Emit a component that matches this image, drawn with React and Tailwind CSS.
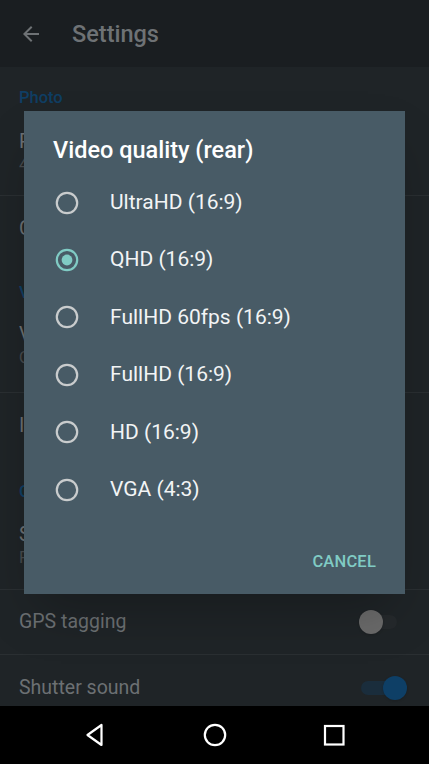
import React from "react";

const font = { fontFamily: "Roboto, 'Noto Sans', sans-serif" };

function Radio({ checked }) {
  return (
    <div className="w-[86px] h-full flex items-center pl-[31px] shrink-0">
      <svg width="24" height="24" viewBox="0 0 24 24">
        {checked ? (
          <>
            <circle cx="12" cy="12" r="10.2" fill="none" stroke="#80cbc4" strokeWidth="2.2" />
            <circle cx="12" cy="12" r="5.4" fill="#80cbc4" />
          </>
        ) : (
          <circle cx="12" cy="12" r="10.2" fill="none" stroke="#c9cccd" strokeWidth="2.2" />
        )}
      </svg>
    </div>
  );
}

const titleCls = "text-[19.5px] leading-[24px] text-[#6c7073]";
const subCls = "text-[16px] leading-[22px] text-[#474b4e]";
const headCls = "pl-[19px] shrink-0 text-[16.5px] leading-[22px] font-medium text-[#0f3e63]";

export default function App() {
  const options = [
    "UltraHD (16:9)",
    "QHD (16:9)",
    "FullHD 60fps (16:9)",
    "FullHD (16:9)",
    "HD (16:9)",
    "VGA (4:3)",
  ];
  return (
    <div style={font} className="relative w-[429px] h-[764px] overflow-hidden bg-[#1f2427] flex flex-col">
      {/* toolbar */}
      <div className="h-[67px] shrink-0 bg-[#1a1e21] flex items-center">
        <div className="w-[72px] flex justify-center pl-[2px] pr-[12px]">
          <svg width="24" height="24" viewBox="0 0 24 24">
            <path d="M20 11H7.83l5.59-5.59L12 4l-8 8 8 8 1.41-1.41L7.83 13H20v-2z" fill="#6e7275" />
          </svg>
        </div>
        <div className="text-[23.5px] font-medium text-[#6e7275] pt-[2px]">Settings</div>
      </div>
      {/* background list */}
      <div className="flex-1 min-h-0 overflow-hidden flex flex-col">
        <div className={headCls + " h-[51px] pt-[20px]"}>Photo</div>
        <div className="pl-[19px] h-[78px] pt-[12px] border-b border-[#2a2f32] shrink-0">
          <div className={titleCls}>Photo resolution</div>
          <div className={subCls}>4128x3096</div>
        </div>
        <div className="pl-[19px] h-[66px] flex items-center shrink-0">
          <div className={titleCls}>Camera mode</div>
        </div>
        <div className={headCls + " h-[51px] pt-[20px]"}>Video</div>
        <div className="pl-[19px] h-[80px] pt-[10px] border-b border-[#2a2f32] shrink-0">
          <div className={titleCls}>Video quality (rear)</div>
          <div className={subCls}>QHD (16:9)</div>
        </div>
        <div className="pl-[19px] h-[65px] flex items-center shrink-0">
          <div className={titleCls}>Image stabilization</div>
        </div>
        <div className={headCls + " h-[53px] pt-[23px]"}>Camera</div>
        <div className="pl-[19px] h-[79px] pt-[12px] border-b border-[#2a2f32] shrink-0">
          <div className={titleCls}>Storage</div>
          <div className={subCls}>Phone storage</div>
        </div>
        <div className="pl-[19px] pr-[32px] h-[65px] shrink-0 flex items-center justify-between border-b border-[#2a2f32]">
          <div className={titleCls}>GPS tagging</div>
          <div className="relative w-[36px] h-[14px] rounded-full bg-[#25292c]">
            <div className="absolute left-[-2px] top-[-5px] w-[24px] h-[24px] rounded-full bg-[#6a6a6a] shadow" />
          </div>
        </div>
        <div className="pl-[19px] pr-[32px] h-[65px] shrink-0 flex items-center justify-between">
          <div className={titleCls}>Shutter sound</div>
          <div className="relative w-[36px] h-[14px] rounded-full bg-[#1a2d3c]">
            <div className="absolute right-[-10px] top-[-5px] w-[24px] h-[24px] rounded-full bg-[#0e3f66] shadow" />
          </div>
        </div>
      </div>
      {/* nav bar */}
      <div className="h-[58px] shrink-0 bg-black flex items-center justify-around px-[36px]">
        <svg width="28" height="28" viewBox="0 0 28 28">
          <path d="M19.5 4 L19.5 24 L5.5 14 Z" fill="none" stroke="#fff" strokeWidth="2.2" strokeLinejoin="round" />
        </svg>
        <svg width="28" height="28" viewBox="0 0 28 28">
          <circle cx="14" cy="14" r="10.2" fill="none" stroke="#fff" strokeWidth="2.2" />
        </svg>
        <svg width="28" height="28" viewBox="0 0 28 28">
          <rect x="5" y="5" width="18.5" height="18.5" fill="none" stroke="#fff" strokeWidth="2.2" />
        </svg>
      </div>
      {/* dialog */}
      <div className="absolute left-[24px] top-[111px] w-[381px] h-[483px] bg-[#485b66] shadow-2xl flex flex-col">
        <div className="pl-[29px] pt-[24px] h-[63px] text-[23.5px] font-medium text-white leading-[30px]">
          Video quality (rear)
        </div>
        <div className="flex flex-col">
          {options.map((o, i) => (
            <div key={o} className="h-[57.4px] flex items-center">
              <Radio checked={i === 1} />
              <div className="text-[21px] text-[#f2f4f5]">{o}</div>
            </div>
          ))}
        </div>
        <div className="flex-1 flex items-end justify-end pr-[29px] pb-[19px]">
          <div className="text-[16.5px] font-medium text-[#80cbc4] tracking-[0.2px]">CANCEL</div>
        </div>
      </div>
    </div>
  );
}
